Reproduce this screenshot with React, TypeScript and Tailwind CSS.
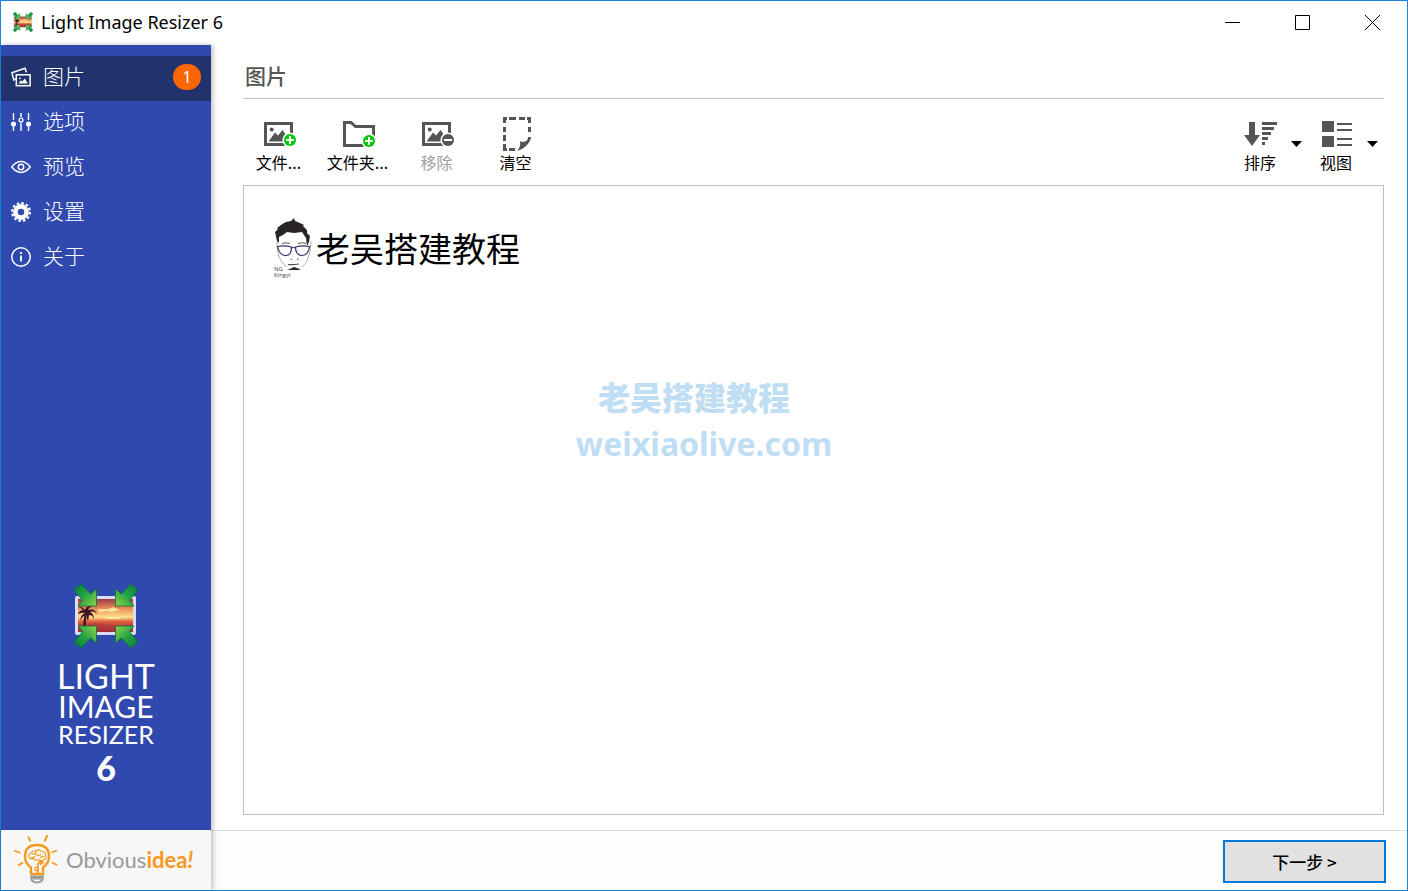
import React, { useState } from 'react';

interface NavItem {
  id: string;
  label: string;
  icon: React.ReactNode;
  badge?: number;
}

const AppIcon = ({ className }: { className: string }) => (
  <svg viewBox="0 0 64 64" className={className} aria-hidden="true">
    <defs>
      <linearGradient id="sky" x1="0" y1="0" x2="0" y2="1">
        <stop offset="0" stopColor="#9c3a45" />
        <stop offset="0.3" stopColor="#ec9058" />
        <stop offset="0.55" stopColor="#fde08a" />
        <stop offset="0.68" stopColor="#e0603c" />
        <stop offset="1" stopColor="#8c2238" />
      </linearGradient>
      <linearGradient id="leaf" x1="0" y1="0" x2="1" y2="1">
        <stop offset="0" stopColor="#067a3a" />
        <stop offset="0.5" stopColor="#25a544" />
        <stop offset="1" stopColor="#8fd34a" />
      </linearGradient>
    </defs>
    <rect x="1" y="12" width="61" height="39" rx="2" fill="#d9dcf4" />
    <rect x="4" y="15" width="55" height="33" fill="url(#sky)" />
    <path d="M24 25h10l5-2 7 3-8 2-6-1-7 1zM30 33h20l-6 2H34z" fill="#fff0b0" opacity="0.8" />
    <path d="M4 41q14-4 26-1t29 0v8H4z" fill="#b5353c" opacity="0.6" />
    <path d="M9 48q0-11 2-20l2 1q-2 9-1 19z" fill="#3a1226" />
    <path d="M12 28Q6 24 4 30q4-2 8-1-5 1-6 7 4-5 7-5-1 3 1 6 1-5 1-6 4 0 5 5 0-6-4-8 4-2 7 2-2-6-9-4 1-3 5-4-6-1-8 4-3-4-7-3 5 1 5 5z" fill="#3a1226" />
    {['', 'translate(64 0) scale(-1 1)', 'translate(0 64) scale(1 -1)', 'translate(64 64) scale(-1 -1)'].map(t => (
      <g key={t} transform={t}>
        <path d="M7 0L0 6l8.500 10.500L4 22h18.500V5l-6 5z" fill="url(#leaf)" stroke="#08733a" strokeWidth="0.8" strokeLinejoin="round" />
      </g>
    ))}
  </svg>
);

const PhotosIcon = () => (
  <svg viewBox="0 0 20 20" className="w-5 h-5" fill="none" stroke="currentColor" strokeWidth="1.5">
    <path d="M5 11.5L2.8 13 .9 5.8 14 1.2l1.4 4" />
    <rect x="5.3" y="7.8" width="13.8" height="10.9" />
    <path d="M7.5 16.5l2.5-3.2 1.4 1.3 2.4-3 3 4.9z" fill="currentColor" stroke="none" />
    <circle cx="9" cy="11.3" r="0.9" fill="currentColor" stroke="none" />
  </svg>
);

const SlidersIcon = () => (
  <svg viewBox="0 0 20 20" className="w-5 h-5" fill="none" stroke="currentColor" strokeWidth="1.4">
    <path d="M2.5 1v7M2.5 14v5M10 1v4M10 11v8M17.5 1v7M17.5 14v5" />
    <circle cx="2.5" cy="12" r="2.5" fill="currentColor" stroke="none" />
    <circle cx="10" cy="8" r="1.9" />
    <circle cx="17.5" cy="12" r="2.5" fill="currentColor" stroke="none" />
  </svg>
);

const EyeIcon = () => (
  <svg viewBox="0 0 20 20" className="w-5 h-5" fill="none" stroke="currentColor" strokeWidth="1.5">
    <path d="M.8 10Q5 4.6 10 4.6T19.2 10Q15 15.4 10 15.4T.8 10z" />
    <circle cx="10" cy="10" r="2.7" />
  </svg>
);

const GearIcon = () => (
  <svg viewBox="0 0 20 20" className="w-5 h-5" fill="none" stroke="currentColor">
    <circle cx="10" cy="10" r="5.6" strokeWidth="4.6" />
    <circle cx="10" cy="10" r="8.9" strokeWidth="2.2" strokeDasharray="2.6 2.06" />
  </svg>
);

const InfoIcon = () => (
  <svg viewBox="0 0 20 20" className="w-5 h-5" fill="none" stroke="currentColor" strokeWidth="1.5">
    <circle cx="10" cy="10" r="9.2" />
    <path d="M10 8.6v6M10 5v2" strokeWidth="1.8" />
  </svg>
);

const PictureIcon = ({ remove = false }: { remove?: boolean }) => (
  <svg viewBox="0 0 36 36" className="w-9 h-9">
    <rect x="4.5" y="7.5" width="26" height="21" fill="none" stroke="#555" strokeWidth="3" />
    <circle cx="10.7" cy="13.5" r="2" fill="#555" />
    <path d="M7.5 25.5l6.5-9 3 3 4.5-5.5 2.5 3.5v8z" fill="#555" />
    <circle cx="29" cy="24" r="7.6" fill="#fff" />
    <circle cx="29" cy="24" r="6" fill={remove ? '#555' : '#00c800'} />
    <path d={remove ? 'M25 24h8' : 'M25 24h8M29 20v8'} stroke="#fff" strokeWidth="2" />
  </svg>
);

const FolderIcon = () => (
  <svg viewBox="0 0 36 36" className="w-9 h-9">
    <path d="M24 29.5H4.5v-23H11l4.5 4H33.5v14" fill="none" stroke="#555" strokeWidth="3" />
    <circle cx="29" cy="25" r="7.6" fill="#fff" />
    <circle cx="29" cy="25" r="6" fill="#00c800" />
    <path d="M25 25h8M29 21v8" stroke="#fff" strokeWidth="2" />
  </svg>
);

const ClearIcon = () => (
  <svg viewBox="0 0 36 36" className="w-9 h-9">
    <path
      d="M5 1h4v3H8v3H5zM11 1h7v3h-7zM21 1h6v3h-6zM29 1h4v6h-3V4h-1zM5 11h3v5H5zM5 19h3v6H5zM5 28h3v4h1v3H5zM11 32h6v3h-6zM30 11h3v5h-3z"
      fill="#555"
    />
    <path d="M33 21q0 4-5 9-4 4-9 5 4-4 3-10 3 2 6 0 2-1 2-4z" fill="#555" />
  </svg>
);

const SortIcon = () => (
  <svg viewBox="0 0 36 36" className="w-9 h-9" fill="#555">
    <path d="M7 6h6v13h5l-8 11-8-11h5zM20 6h15v3H20zM20 11h12v3H20zM20 16h9v3h-9zM20 21h6v3h-6zM20 26h3v3h-3z" />
  </svg>
);

const ViewIcon = () => (
  <svg viewBox="0 0 36 36" className="w-9 h-9" fill="#555">
    <path d="M4 5h12v11H4zM4 20h12v11H4zM19 7h15v2H19zM19 13h15v2H19zM19 22h15v2H19zM19 28h15v2H19z" />
  </svg>
);

const BulbLogo = () => (
  <svg viewBox="0 0 46 50" className="w-[46px] h-[50px] shrink-0" fill="none" stroke="#f8991d">
    <path d="M16 2.5l2.5 5M35.5 1l-3 6.5M2 16.5l6.5 2.5M6 31.500l5-3M45 16.500l-5.500 2M45 31l-5-2.500" strokeWidth="1.8" />
    <path d="M19 40v-6.500Q13 29.500 13 22.500 13 11 25 11t12 11.500q0 7-6 11V40z" strokeWidth="2.400" strokeLinejoin="round" />
    <path d="M26 40v-9q0-3 3-4" strokeWidth="1.600" />
    <path d="M17.500 24q-2-4 2-5 1-3 4.500-2 3-2.500 5.500.5 4.500 0 4 4 1.500 3.500-2 4.500-3 1.500-5-.5-4 1.500-5-1-3 1-4-.5zM20 20q2-1 3.500.5M24 17.500q-1.500 2 1 3.500t4-1M19 23.500q3 .5 4-1.500M28 24q2-2.500 4-1" strokeWidth="1.200" />
    <circle cx="24.500" cy="35" r="1.800" strokeWidth="1.300" />
    <path d="M28 26.500q4 0 3 3l-3 1z" fill="#f8991d" strokeWidth="1" />
    <path d="M19 42.500h12q0 6-6 6t-6-6zM20.500 44.500h9" stroke="#999" strokeWidth="1.800" />
  </svg>
);

const FaceLogo = () => (
  <svg viewBox="0 0 40 52" className="w-10 h-[52px]">
    <path
      d="M3 23L1 14l3-3-1-1 4-3 3-2 2-1 5-1 3-3 1 3 5 2 4 2-1 1 4 4v3l3 3-1 6-2 4-1-8-4-6-8 1-7-1-4 3-4 2v6z"
      fill="#2a2529"
    />
    <path d="M3 24q0 12 4 19 3 4 6 6M37 23q0 12-4 20-2 4-5 6" fill="none" stroke="#999" strokeWidth="0.8" />
    <path d="M8 25.500q4-1.500 8 0M24 25.500q5-1.500 8 0" fill="none" stroke="#555" strokeWidth="1" />
    <g fill="none" stroke="#3b3170" strokeWidth="1.200">
      <path d="M3.500 28.500q7-1.500 14 .5 0 8-5 8.500-7 .5-9-9zM21.500 29q7-2 14-.5-1 9-8 9-6-.5-6-8.500zM17.500 30q2-1 4 0" />
    </g>
    <path d="M16.500 41l1.500.8M23 41.500l1.500-.5" stroke="#555" strokeWidth="1" />
    <path d="M14 46.500q5 .5 11-.5" fill="none" stroke="#555" strokeWidth="1.200" />
    <path d="M13 51.500l4-1 3-1.500 3 1 4 1.500-3 .5h-7z" fill="#2a2529" />
  </svg>
);

const NAV_ITEMS: NavItem[] = [
  { id: 'images', label: '图片', icon: <PhotosIcon />, badge: 1 },
  { id: 'options', label: '选项', icon: <SlidersIcon /> },
  { id: 'preview', label: '预览', icon: <EyeIcon /> },
  { id: 'settings', label: '设置', icon: <GearIcon /> },
  { id: 'about', label: '关于', icon: <InfoIcon /> },
];

const TOOLS = [
  { label: '文件...', icon: <PictureIcon />, disabled: false },
  { label: '文件夹...', icon: <FolderIcon />, disabled: false },
  { label: '移除', icon: <PictureIcon remove />, disabled: true },
  { label: '清空', icon: <ClearIcon />, disabled: false },
];

const MENUS = [
  { label: '排序', icon: <SortIcon /> },
  { label: '视图', icon: <ViewIcon /> },
];

const TitleBar = () => (
  <header className="h-11 flex items-center justify-between bg-white pl-3 pb-0.5">
    <div className="flex items-center gap-2">
      <AppIcon className="w-5 h-5" />
      <h1 className="text-lg text-black font-['Noto_Sans',sans-serif]">Light Image Resizer 6</h1>
    </div>
    <div className="flex h-full text-black">
      <button type="button" aria-label="最小化" className="w-[70px] flex items-center justify-center hover:bg-gray-200">
        <svg viewBox="0 0 15 15" className="w-[15px] h-[15px]"><path d="M0 7.5h15" stroke="currentColor" /></svg>
      </button>
      <button type="button" aria-label="最大化" className="w-[70px] flex items-center justify-center hover:bg-gray-200">
        <svg viewBox="0 0 15 15" className="w-[15px] h-[15px]"><path d="M.5.5h14v14H.5z" fill="none" stroke="currentColor" /></svg>
      </button>
      <button type="button" aria-label="关闭" className="w-[70px] flex items-center justify-center hover:bg-red-500">
        <svg viewBox="0 0 15 15" className="w-[15px] h-[15px]"><path d="M0 0l15 15M15 0L0 15" stroke="currentColor" /></svg>
      </button>
    </div>
  </header>
);

interface SidebarProps {
  active: string;
  onSelect: (id: string) => void;
}

const Sidebar: React.FC<SidebarProps> = ({ active, onSelect }) => (
  <aside className="w-[210px] shrink-0 flex flex-col bg-[#2f49af] text-white shadow-[2px_0_5px_rgba(0,0,0,0.25)] z-10">
    <nav className="pt-[11px] flex flex-col">
      {NAV_ITEMS.map(item => (
        <a
          key={item.id}
          href={`#${item.id}`}
          onClick={() => onSelect(item.id)}
          className={`h-[45px] flex items-center gap-3 px-[10px] pb-[3px] ${active === item.id ? 'bg-[#20336d]' : ''}`}
        >
          {item.icon}
          <span className="text-[21px] leading-7 pb-1 font-light flex-1">{item.label}</span>
          {item.badge && (
            <span className="w-7 h-[26px] rounded-full bg-[#ff6600] flex items-center justify-center text-base font-['Noto_Sans',sans-serif]">
              {item.badge}
            </span>
          )}
        </a>
      ))}
    </nav>

    <div className="mt-auto pb-[42px] flex flex-col items-center font-['Lato',sans-serif]">
      <AppIcon className="w-16 h-16" />
      <p className="mt-3 flex flex-col items-center">
        <span className="text-[34px] leading-8">LIGHT</span>
        <span className="text-[30px] leading-7">IMAGE</span>
        <span className="text-[25px] leading-7">RESIZER</span>
        <span className="text-[34px] leading-10 font-black">6</span>
      </p>
    </div>

    <a href="#obviousidea" className="h-[60px] flex items-center gap-2 pl-[11px] pb-[2px] bg-[#f7f7f7] font-['Lato',sans-serif] text-[22px]">
      <BulbLogo />
      <span className="text-[#999]">
        Obvious<span className="text-[#f8991d] font-bold">idea<i>!</i></span>
      </span>
    </a>
  </aside>
);

const Toolbar = () => (
  <div className="pt-[17px] pb-[13px] flex justify-between text-base text-black">
    <div className="flex -ml-1">
      {TOOLS.map(tool => (
        <button
          key={tool.label}
          type="button"
          disabled={tool.disabled}
          className="w-[79px] flex flex-col items-center disabled:text-[#a0a0a0]"
        >
          {tool.icon}
          <span className="leading-5">{tool.label}</span>
        </button>
      ))}
    </div>
    <div className="flex gap-1">
      {MENUS.map(menu => (
        <div key={menu.label} className="flex">
          <button type="button" className="w-12 flex flex-col items-center">
            {menu.icon}
            <span className="leading-5">{menu.label}</span>
          </button>
          <button type="button" aria-label={`${menu.label}菜单`} className="w-6 flex items-center justify-center">
            <svg viewBox="0 0 11 6" className="w-[11px] h-[6px]"><path d="M0 0h11L5.5 6z" /></svg>
          </button>
        </div>
      ))}
    </div>
  </div>
);

export default function App() {
  const [active, setActive] = useState('images');

  return (
    <div className="relative min-h-screen flex flex-col bg-white border border-[#1883d7] font-['Noto_Sans_CJK_SC',sans-serif]">
      <TitleBar />

      <div className="flex-1 flex">
        <Sidebar active={active} onSelect={setActive} />

        <div className="flex-1 flex flex-col">
          <main className="flex-1 flex flex-col pl-8 pr-[23px]">
            <h2 className="h-[54px] pt-4 pl-0.5 border-b border-[#c0c0c0] text-[21px] leading-7 font-medium text-[#555]">图片</h2>
            <Toolbar />
            <section className="flex-1 mb-[15px] border border-[#bfbfbf] px-[30px] py-8">
              <figure className="flex items-center gap-0.5">
                <div className="flex flex-col">
                  <FaceLogo />
                  <span className="-mt-1 text-[6px] leading-[6px] text-[#444] font-['Open_Sans',sans-serif]">NG<br />Kingyi</span>
                </div>
                <figcaption className="text-[34px] leading-10 text-black">老吴搭建教程</figcaption>
              </figure>
            </section>
          </main>

          <footer className="h-[60px] pt-0.5 border-t border-[#dcdcdc] bg-[#fdfdfd] flex items-center justify-end pr-[21px]">
            <button
              type="button"
              className="w-[163px] h-[43px] border-2 border-[#0078d7] bg-[#e1e1e1] text-[17px] leading-6 font-medium text-black"
            >
              下一步 &gt;
            </button>
          </footer>
        </div>
      </div>

      <div className="absolute inset-0 pb-13 flex flex-col items-center justify-center text-[32px] leading-11 text-[#bfddf3] font-black pointer-events-none">
        <span className="pr-5">老吴搭建教程</span>
        <span className="mt-1 font-['Noto_Sans',sans-serif] font-bold">weixiaolive.com</span>
      </div>
    </div>
  );
}
